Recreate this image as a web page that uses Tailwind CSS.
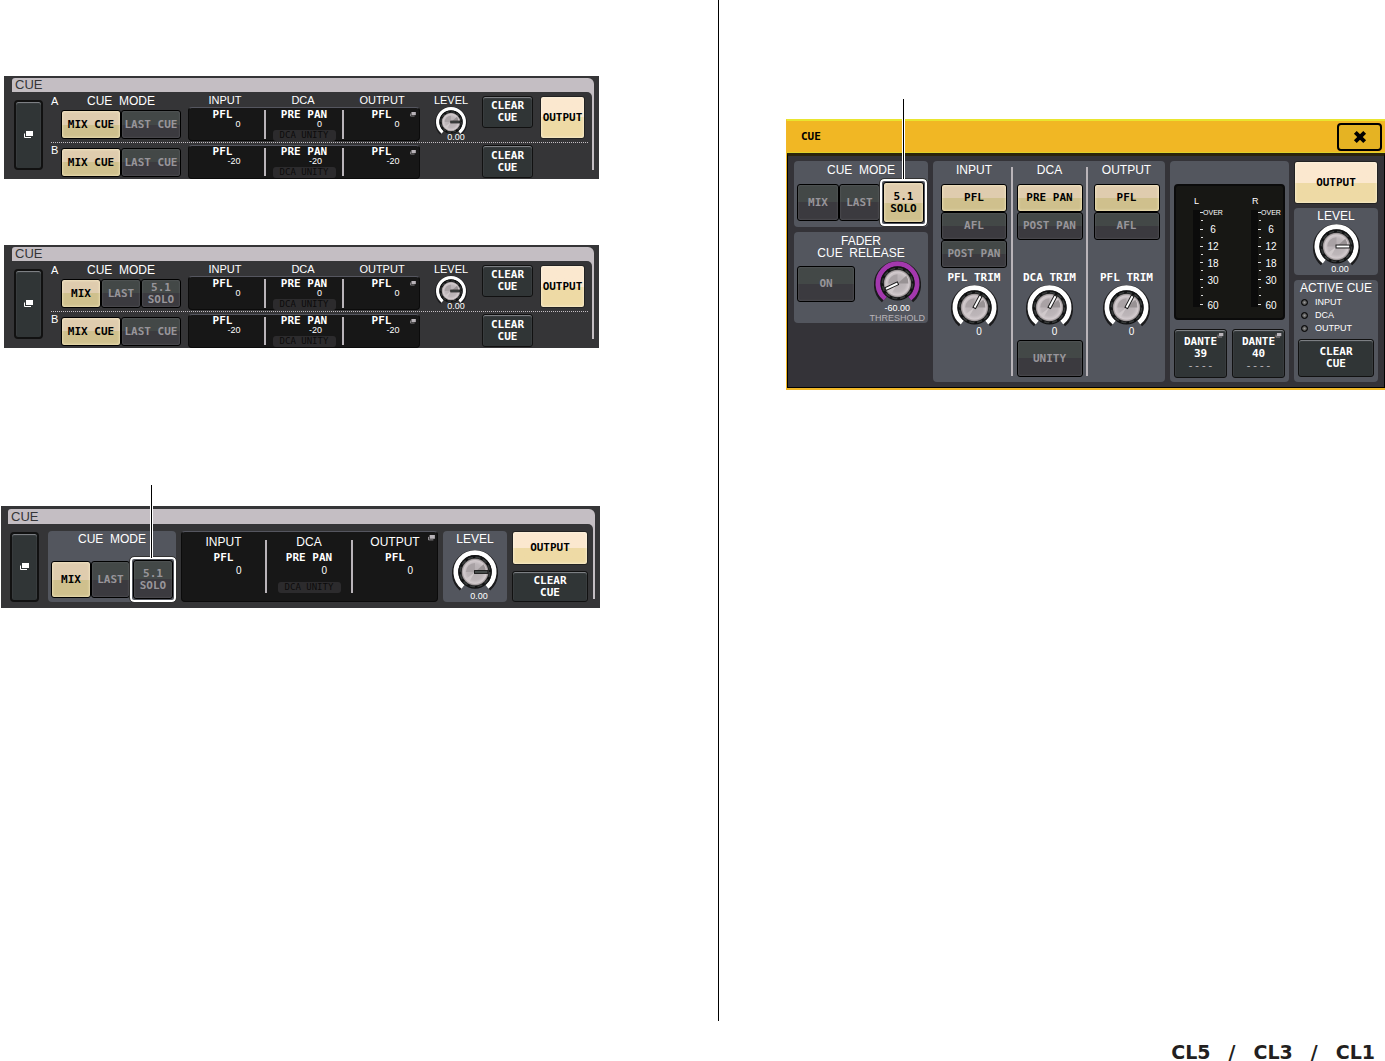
<!DOCTYPE html>
<html lang="en">
<head>
    <meta charset="UTF-8">
    <meta name="viewport" content="width=device-width, initial-scale=1.0">
    <title>CL5/CL3/CL1 Cue</title>
    <script src="https://cdn.jsdelivr.net/npm/@tailwindcss/browser@4"></script>
</head>
<body class="bg-white font-['Liberation_Sans',Arial,sans-serif] text-white">
    <!-- shared drawings -->
    <svg class="absolute size-0" aria-hidden="true">
        <symbol id="win" viewBox="0 0 9 8">
            <rect x="2" y="0" width="7" height="5" fill="currentColor"/>
            <path d="M.5 2.5V6.5H7" fill="none" stroke="currentColor"/>
        </symbol>
        <radialGradient id="cap" cx=".5" cy=".5" r=".5">
            <stop offset="0" stop-color="#b5aeb1"/>
            <stop offset=".6" stop-color="#bdb6b9"/>
            <stop offset=".85" stop-color="#d3cbce"/>
            <stop offset="1" stop-color="#8a8485"/>
        </radialGradient>
        <symbol id="knob" viewBox="0 0 48 48">
            <path d="M10.5 40.5A20.4 20.4 0 1 1 37.5 40.5" fill="none" stroke="#1b1b1d" stroke-width="7.4"/>
            <path d="M11.5 39.5A20 20 0 1 1 36.5 39.5" fill="none" stroke="currentColor" stroke-width="5"/>
            <circle cx="24" cy="24" r="17.4" fill="#111213"/>
            <circle cx="24" cy="24" r="15.4" fill="none" stroke="#383b3b" stroke-width="1.6" stroke-dasharray="5.2 2.86"/>
            <circle cx="24" cy="24" r="14" fill="url(#cap)"/>
            <path d="M24 24L14.5 24A9.5 9.5 0 0 1 24 14.5Z" fill="#a9a2a5"/>
            <path d="M24 24L33 16A11 11 0 0 1 35 24Z" fill="#989294"/>
            <path d="M24 24L18 34A11 11 0 0 1 15 31Z" fill="#d0c9cb"/>
        </symbol>
    </svg>

    <main class="grid min-h-screen grid-cols-[719fr_666fr]">
        <section id="left" class="mb-10 flex flex-col border-r border-black pt-[76px]"></section>
        <section class="flex flex-col">
            <div id="popup" class="relative mt-[119px] ml-[67px]"></div>
            <footer class="mt-auto mr-[10px] flex h-[18px] items-center gap-[18px] self-end font-['DejaVu_Sans',sans-serif] text-[19px] leading-[18px] font-bold text-[#231f20]">
                <span>CL5</span><span>/</span><span>CL3</span><span>/</span><span>CL1</span>
            </footer>
        </section>
    </main>

    <script>
        const lcd = "font-['DejaVu_Sans_Mono',monospace] text-[11px] leading-[12px] font-bold";
        const kinds = {
            on: 'border-black bg-linear-to-b from-[#dfccae] from-50% to-[#cfc08d] to-50% text-black inset-shadow-[0_0_3px_#fff3d0]',
            off: 'border-black bg-linear-to-b from-[#434847] from-50% to-[#3b3a3f] to-50% text-[#98959a] inset-shadow-[0_0_2px_#66686c]',
            dark: 'border-[#111] bg-[#303536] text-white inset-shadow-[0_1px_1px_#85888c]',
            out: 'border-[#222] bg-linear-to-b from-[#fbe8cf] from-50% to-[#eedaa5] to-50% text-black inset-shadow-[0_0_3px_#fff8e8]',
        };

        const btn = (text, kind, size) =>
            `<button class="${lcd} ${kinds[kind]} ${size} shrink-0 rounded-[3px] border text-center whitespace-nowrap">${text}</button>`;
        const win = size => `<svg class="${size}"><use href="#win"/></svg>`;
        const title = (text, size) => `<h3 class="${size} text-center whitespace-nowrap">${text}</h3>`;

        // angle 0 points right, negative turns it up
        const knob = (name, size, angle, pointer, tint = 'text-white') => `
            <div class="relative shrink-0 ${size} ${tint}">
                <input type="range" class="absolute inset-0 size-full opacity-0" aria-label="${name}">
                <svg class="block size-full" viewBox="0 0 48 48">
                    <use href="#knob" width="48" height="48"/>
                    <g transform="rotate(${angle} 24 24)">
                        <path d="M23 24H38" stroke="#151515" stroke-width="4"/>
                        <path d="M24 24H37" stroke="${pointer}" stroke-width="2"/>
                    </g>
                </svg>
            </div>`;

        const infinity = '<p class="h-[10px] text-center text-[9px] leading-[10px]">0.00</p>';
        const unity = `<span class="font-['DejaVu_Sans_Mono',monospace] block h-[11px] w-[63px] rounded-[3px] bg-[#2c2b2d] text-center text-[9px] leading-[11px] text-[#0c0c0c]">DCA UNITY</span>`;

        function cell(mode, value, pad, extra = '') {
            return `
                <div class="flex flex-col items-center ${pad}">
                    <p class="${lcd} h-[10px] leading-[10px]">${mode}</p>
                    <p class="h-[11px] w-[36px] text-right text-[9px] leading-[11px]">${value}</p>
                    ${extra}
                </div>`;
        }

        function box(value, pad) {
            const rule = '<i class="my-[2px] w-[2px] bg-[#b9b4b9]"></i>';
            return `
                <div class="relative grid h-[34px] w-[232px] grid-cols-[75px_2px_76px_2px_75px] rounded-[4px] border border-[#0b0b0b] border-t-[#55565f] bg-[#171717]">
                    ${cell('PFL', value, pad + ' pr-[8px]')}${rule}${cell('PRE PAN', value, pad, unity)}${rule}${cell('PFL', value, pad)}
                    <span class="absolute top-[4px] right-[3px] text-[#b9b4b9]">${win('h-[5px] w-[6px]')}</span>
                </div>`;
        }

        function panel(body, size, bar) {
            return `
                <section class="relative w-full ${size} bg-[#353537] pr-[5px] pb-[9px]">
                    <div class="flow-root rounded-tl-[3px] rounded-tr-[6px] bg-[#c4bec3]">
                        <h2 class="${bar} pl-[3px] text-[13px] text-[#353537]">CUE</h2>
                        <div class="mr-[2px] mb-[-9px] flex rounded-tr-[5px] bg-[#353537]">${body}</div>
                    </div>
                </section>`;
        }

        const pair = btn('MIX CUE', 'on', 'w-[60px]') + btn('LAST CUE', 'off', 'w-[60px]');
        const triple = btn('MIX', 'on', 'w-[40px]') + btn('LAST', 'off', 'w-[40px]') + btn('5.1<br>SOLO', 'off', 'w-[40px]');
        const opener = `<button class="${kinds.dark} mt-[8px] ml-[2px] flex h-[70px] w-[29px] items-center justify-center rounded-[4px] border-2" aria-label="Open cue">${win('h-[8px] w-[9px]')}</button>`;

        function dualPanel(modes) {
            return panel(`
                ${opener}
                <div class="ml-[8px] flex-1 pr-[4px] text-[11px]">
                    <div class="flex h-[51px] border-b border-dotted border-[#c4bec3]">
                        <b class="w-[10px] pt-[3px] text-[11px] leading-[12px] font-normal">A</b>
                        <div>
                            ${title('CUE&nbsp; MODE', 'h-[18px] text-[12px] leading-[18px]')}
                            <div class="flex h-[29px]">${modes}</div>
                        </div>
                        <div class="ml-[7px]">
                            <div class="grid grid-cols-[74px_82px_76px]">
                                ${title('INPUT', 'h-[15px] leading-[17px]')}
                                ${title('DCA', 'h-[15px] leading-[17px]')}
                                ${title('OUTPUT', 'h-[15px] leading-[17px]')}
                            </div>
                            ${box('0', 'pt-px')}
                        </div>
                        <div class="flex flex-1 flex-col items-center">
                            ${title('LEVEL', 'h-[14px] leading-[17px]')}
                            ${knob('Level', 'size-[32px]', 0, '#4a4f4e')}
                            <div class="relative -mt-[6px] pl-[10px]">${infinity}</div>
                        </div>
                        ${btn('CLEAR<br>CUE', 'dark', 'mt-[4px] h-[32px] w-[51px]')}
                        ${btn('OUTPUT', 'out', 'mt-[4px] mr-[3px] ml-[7px] h-[43px] w-[45px]')}
                    </div>
                    <div class="flex h-[36px]">
                        <b class="w-[10px] pt-[1px] text-[11px] leading-[12px] font-normal">B</b>
                        <div class="mt-[5px] flex h-[29px]">${pair}</div>
                        <div class="mt-[2px] ml-[7px]">${box('-20', 'pt-0')}</div>
                        <div class="flex-1"></div>
                        ${btn('CLEAR<br>CUE', 'dark', 'mt-[2px] mr-[55px] h-[33px] w-[51px]')}
                    </div>
                </div>`, 'max-w-[595px] pt-[2px] pl-[8px]', 'h-[14px] leading-[14px]');
        }

        function column(name, mode, extra = '') {
            return `
                <div class="flex flex-col items-center pt-[2px]">
                    ${title(name, 'h-[16px] text-[12px] leading-[16px]')}
                    <p class="${lcd} mt-[2px]">${mode}</p>
                    <p class="h-[14px] w-[36px] text-right text-[10px] leading-[14px]">0</p>
                    ${extra}
                </div>`;
        }

        // leader line and frame that mark the 5.1 SOLO button
        const lead = place => `<i class="absolute ${place} w-[3px] border-x border-white bg-black"></i>`;
        const mark = inner => `<div class="relative flex rounded-[4px] border-2 border-white p-px outline outline-[#333]">${inner}</div>`;

        const singlePanel = panel(`
            ${opener}
            <div class="mt-[7px] mb-[6px] ml-[9px] flex h-[71px] flex-1 pr-[5px]">
                <div class="w-[128px] rounded-[4px] bg-[#53565e]">
                    ${title('CUE&nbsp; MODE', 'h-[16px] text-[12px] leading-[16px]')}
                    <div class="mt-[10px] flex h-[45px] items-center pl-[3px]">
                        ${btn('MIX', 'on', 'h-[37px] w-[40px]')}
                        ${btn('LAST', 'off', 'h-[37px] w-[39px]')}
                        ${mark(btn('5.1<br>SOLO', 'off', 'h-[39px] w-[40px]'))}
                    </div>
                </div>
                <div class="relative ml-[5px] grid w-[257px] grid-cols-[83px_2px_84px_2px_84px] rounded-[4px] border border-[#0b0b0b] border-t-[#55565f] bg-[#171717]">
                    ${column('INPUT', 'PFL')}
                    <i class="my-[8px] w-[2px] bg-[#b9b4b9]"></i>
                    ${column('DCA', 'PRE PAN', `<div class="mt-[4px]">${unity}</div>`)}
                    <i class="my-[8px] w-[2px] bg-[#b9b4b9]"></i>
                    ${column('OUTPUT', 'PFL')}
                    <span class="absolute top-[3px] right-[2px] text-[#b9b4b9]">${win('h-[6px] w-[7px]')}</span>
                </div>
                <div class="ml-[5px] flex w-[64px] flex-col items-center rounded-[4px] bg-[#53565e]">
                    ${title('LEVEL', 'h-[18px] text-[12px] leading-[17px]')}
                    ${knob('Level', 'size-[46px]', 0, '#4a4f4e')}
                    <div class="relative -mt-[4px] pl-[8px]">${infinity}</div>
                </div>
                <div class="ml-[5px] flex flex-1 flex-col justify-between">
                    ${btn('OUTPUT', 'out', 'h-[34px] w-full')}
                    ${btn('CLEAR<br>CUE', 'dark', 'h-[31px] w-full')}
                </div>
            </div>`, 'max-w-[599px] pt-[3px] pl-[7px]', 'h-[15px] leading-[15px]');

        document.getElementById('left').innerHTML = `
            <div class="ml-[4px]">${dualPanel(pair)}</div>
            <div class="mt-[66px] ml-[4px]">${dualPanel(triple)}</div>
            <div class="relative mt-[158px] ml-[1px]">${singlePanel}${lead('-top-[21px] left-[149px] h-[73px]')}</div>`;

        const card = 'rounded-[4px] bg-[#53565e]';
        const head = 'h-[18px] text-[12px] leading-[18px]';

        function source(name, modes, trim, pad, extra = '') {
            return `
                <div class="flex flex-col items-center ${pad}">
                    ${title(name, head)}
                    <div class="mt-[5px] flex h-[84px] flex-col">
                        ${modes.map((m, i) => btn(m, i ? 'off' : 'on', 'h-[28px] w-[66px]')).join('')}
                    </div>
                    <p class="${lcd} mt-[4px] whitespace-nowrap">${trim}</p>
                    ${knob(trim, 'size-[47px]', -62, '#fff')}
                    <p class="relative -mt-[4px] pl-[10px] text-[10px] leading-[10px]">0</p>
                    ${extra}
                </div>`;
        }

        function meter(side) {
            const y = [2, 10, 19, 27, 36, 44, 52, 60, 69, 77, 85, 94];
            const ticks = y.map((v, i) => `<path d="M${i % 2 && i < 11 || i == 10 ? 8 : 7} ${v + .5}H10" stroke="#ddd"/>`).join('');
            return `
                <div class="w-[58px] shrink-0 pl-[17px]">
                    <p class="pl-[1px] text-[9px] leading-[10px]">${side}</p>
                    <div class="mt-[4px] flex text-[10px]">
                        <svg class="h-[97px] w-[10px]"><rect width="7" height="97" fill="#0b0b0b"/>${ticks}</svg>
                        <ul class="-mt-[6px] w-[20px] text-center leading-[17px]">
                            <li class="text-[7px]">OVER</li><li>6</li><li>12</li><li>18</li><li>30</li><li class="mt-[8px]">60</li>
                        </ul>
                    </div>
                </div>`;
        }

        const port = n => `
            <button class="${lcd} ${kinds.dark} relative h-[49px] w-[53px] rounded-[3px] border">DANTE<br>${n}<br><span class="font-normal text-[#b9b4b9]">----</span>
                <span class="absolute top-[3px] right-[2px] text-[#b9b4b9]">${win('h-[5px] w-[7px]')}</span>
            </button>`;
        const led = text => `
            <li class="flex items-center gap-[7px]"><i class="size-[7px] rounded-full border border-black bg-radial from-[#999] to-[#222]"></i>${text}</li>`;
        const rule = '<i class="my-[6px] bg-[#b9b4b9]"></i>';

        document.getElementById('popup').innerHTML = `
            <div class="border-t-2 border-b-2 border-l border-t-[#e9e52f] border-b-[#f1b827] border-l-[#f1b827] bg-[#343338]">
                <header class="flex h-[32px] items-center justify-between border-b border-[#ddd02a] bg-[#f1b724] pr-[3px] pl-[14px]">
                    <h2 class="${lcd} text-black">CUE</h2>
                    <button class="flex h-[28px] w-[45px] items-center justify-center rounded-[4px] border-2 border-black bg-[#e5b323]" aria-label="Close">
                        <svg class="size-[14px]" viewBox="0 0 12 12"><path d="M2 2L10 10M10 2L2 10" stroke="#000" stroke-width="3.4"/></svg>
                    </button>
                </header>
                <div class="flex gap-[5px] border border-t-[3px] border-black border-t-[#2b230c] px-[6px] pt-[5px] pb-[5px]">
                    <div class="w-[134px]">
                        <div class="${card} h-[66px]">
                            ${title('CUE&nbsp; MODE', head)}
                            <div class="flex h-[47px] items-center pl-[3px]">
                                ${btn('MIX', 'off', 'h-[37px] w-[42px]')}
                                ${btn('LAST', 'off', 'h-[37px] w-[41px]')}
                                ${mark(btn('5.1<br>SOLO', 'on', 'h-[41px] w-[41px]'))}
                            </div>
                        </div>
                        <div class="${card} mt-[5px] h-[91px] pt-[3px]">
                            ${title('FADER', 'text-[12px] leading-[12px]')}
                            ${title('CUE&nbsp; RELEASE', 'text-[12px] leading-[12px]')}
                            <div class="flex justify-between px-[3px]">
                                ${btn('ON', 'off', 'mt-[7px] h-[36px] w-[58px]')}
                                <div class="flex flex-col items-center pt-px text-[9px] leading-[10px]">
                                    ${knob('Threshold', 'size-[47px]', 155, '#fff', 'text-[#a338ae]')}
                                    <p class="relative -mt-[4px]">-60.00</p>
                                    <p class="text-[#b9b4b9]">THRESHOLD</p>
                                </div>
                            </div>
                        </div>
                    </div>
                    <div class="${card} grid h-[221px] flex-1 grid-cols-[78px_2px_73px_2px_1fr]">
                        ${source('INPUT', ['PFL', 'AFL', 'POST PAN'], 'PFL TRIM', 'pl-[4px]')}
                        ${rule}
                        ${source('DCA', ['PRE PAN', 'POST PAN'], 'DCA TRIM', '', btn('UNITY', 'off', 'mt-[3px] h-[37px] w-[66px]'))}
                        ${rule}
                        ${source('OUTPUT', ['PFL', 'AFL'], 'PFL TRIM', '')}
                    </div>
                    <div class="${card} w-[119px] px-[4px] pt-[23px]">
                        <div class="flex h-[136px] overflow-hidden rounded-[4px] border-2 border-[#0b0b0b] bg-[#171714] pt-[10px]">${meter('L')}${meter('R')}</div>
                        <div class="mt-[9px] flex justify-between">${port(39)}${port(40)}</div>
                    </div>
                    <div class="flex w-[84px] flex-col">
                        ${btn('OUTPUT', 'out', 'h-[43px] w-full')}
                        <div class="${card} mt-[4px] flex h-[67px] flex-col items-center">
                            ${title('LEVEL', 'h-[15px] text-[12px] leading-[16px]')}
                            ${knob('Level', 'size-[47px]', 0, '#fff')}
                            <div class="relative -mt-[6px] pl-[8px]">${infinity}</div>
                        </div>
                        <div class="${card} mt-[5px] h-[102px] px-[4px]">
                            ${title('ACTIVE CUE', 'h-[16px] text-[12px] leading-[16px]')}
                            <ul class="pl-[3px] text-[9px] leading-[13px]">${led('INPUT')}${led('DCA')}${led('OUTPUT')}</ul>
                            ${btn('CLEAR<br>CUE', 'dark', 'mt-[4px] h-[38px] w-full')}
                        </div>
                    </div>
                </div>
            </div>
            ${lead('-top-[20px] left-[116px] h-[80px]')}`;
    </script>
</body>
</html>
